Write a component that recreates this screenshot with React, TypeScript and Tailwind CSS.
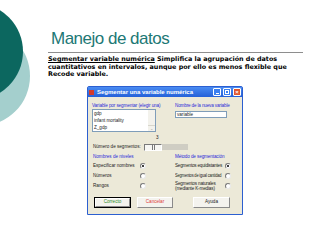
import React from "react";

const ui = { fontFamily: '"Liberation Sans", Arial, sans-serif' };

function Radio({ checked }: { checked?: boolean }) {
  return (
    <span className="flex h-[6px] w-[6px] shrink-0 items-center justify-center rounded-full border border-t-[#7a7a7a] border-l-[#7a7a7a] border-b-[#e8e8e8] border-r-[#e8e8e8] bg-white">
      {checked && <span className="h-[2px] w-[2px] rounded-full bg-black" />}
    </span>
  );
}

function XpButton({ label, color, strong, w }: { label: string; color: string; strong?: boolean; w: string }) {
  return (
    <div className={`${w} h-[11px] ${strong ? "border border-black" : ""} bg-[#f4f3ee]`}>
      <div
        className={`flex h-full items-center justify-center border border-t-white border-l-white border-b-[#8a8a8a] border-r-[#8a8a8a] ${color}`}
      >
        {label}
      </div>
    </div>
  );
}

export default function App() {
  return (
    <div className="relative h-[240px] w-[320px] overflow-hidden bg-white">
      {/* slide decoration */}
      <div className="absolute left-[-70px] top-[26px] h-[100px] w-[100px] rounded-full bg-[#a4cfcd]" />
      <div className="absolute left-[-74px] top-[3px] h-[97px] w-[97px] rounded-full bg-[#0c675f]" />

      <div className="relative pl-[48px] pt-[30px]">
        <h1
          className="ml-[3px] text-[17px] leading-[17px] tracking-[-0.5px] text-[#217875]"
          style={ui}
        >
          Manejo de datos
        </h1>
        <div className="mt-[5px] h-[1px] w-[255px] bg-[#8e8e8e]" />

        <p
          className="mt-[3px] h-[22px] whitespace-nowrap text-[6.4px] font-bold leading-[7.5px] text-black"
          style={{ fontFamily: '"DejaVu Sans", Verdana, sans-serif' }}
        >
          <span className="underline">Segmentar variable numérica</span> Simplifica la agrupación de datos
          <br />
          cuantitativos en intervalos, aunque por ello es menos flexible que
          <br />
          Recode variable.
        </p>

        {/* dialog */}
        <div className="ml-[39px] mt-[8px] w-[156px] rounded-t-[2px] border border-[#2c5fd0]" style={ui}>
          <div className="flex h-[10px] items-center bg-gradient-to-b from-[#4a8cf2] to-[#2560d8] pl-[1px] pr-[1px]">
            <span className="h-[5px] w-[5px] bg-[#d23a2c]" />
            <span className="ml-[3px] whitespace-nowrap text-[6px] font-bold leading-[6px] text-white">
              Segmentar una variable numérica
            </span>
            <div className="ml-auto flex gap-[2px]">
              <span className="flex h-[8px] w-[8px] items-end justify-center rounded-[1px] border border-white bg-[#3b7ff0] pb-[1px]">
                <span className="h-[1px] w-[3px] bg-white" />
              </span>
              <span className="flex h-[8px] w-[8px] items-center justify-center rounded-[1px] border border-white bg-[#3b7ff0]">
                <span className="h-[4px] w-[4px] border border-white" />
              </span>
              <span className="flex h-[8px] w-[8px] items-center justify-center rounded-[1px] border border-white bg-[#e0562e] text-[6px] font-bold leading-[6px] text-white">
                ×
              </span>
            </div>
          </div>

          <div className="whitespace-nowrap bg-[#ece9d8] px-[4px] pb-[6px] pt-[6px] text-[4.6px] text-[#222]">
            <div className="flex h-[30px]">
              <div className="w-[64px]">
                <div className="h-[6px] leading-[6px] tracking-[-0.1px] text-[#2a2ad8]">Variable por segmentar (elegir una)</div>
                <div className="flex h-[23px] border border-[#7f9db9] bg-white">
                  <div className="flex-1 pl-[1px] leading-[7px]">
                    <div>gdp</div>
                    <div>infant mortality</div>
                    <div>Z_gdp</div>
                  </div>
                  <div className="flex w-[7px] flex-col justify-end bg-[#f3f2ec]">
                    <div className="h-[6px] border-t border-[#d8d6cc] text-center text-[4px] leading-[5px] text-[#9a9a9a]">⌄</div>
                  </div>
                </div>
              </div>
              <div className="ml-[19px] w-[52px]">
                <div className="h-[6px] leading-[6px] tracking-[-0.15px] text-[#2a2ad8]">Nombre de la nueva variable</div>
                <div className="mt-[2px] h-[7px] border border-[#7f9db9] bg-white pl-[1px] leading-[5px]">variable</div>
              </div>
            </div>

            <div className="mt-[2px] h-[6px] pl-[64px] leading-[6px]">3</div>

            <div className="mt-[1px] flex h-[10px] items-center">
              <span className="w-[52px] pl-[1px]">Número de segmentos:</span>
              <div className="flex h-[7px] w-[18px] items-center border border-t-[#7a7a7a] border-l-[#7a7a7a] border-b-white border-r-white bg-[#f7f7f4] pl-[7px]">
                <span className="h-[5px] w-[3px] border-x border-[#7a7a7a]" />
              </div>
              <div className="h-[6px] w-[26px] bg-[#cfcdc3]" />
            </div>

            <div className="mt-[2px] flex h-[6px] leading-[6px] text-[#2a2ad8]">
              <span className="w-[83px] pl-[1px]">Nombres de niveles</span>
              <span className="tracking-[-0.1px]">Método de segmentación</span>
            </div>

            <div className="mt-[1px]">
              <div className="flex h-[10px] items-center">
                <span className="w-[48px] pl-[1px]">Especificar nombres</span>
                <Radio checked />
                <span className="ml-[29px] w-[50px] tracking-[-0.2px]">Segmentos equidistantes</span>
                <Radio checked />
              </div>
              <div className="flex h-[10px] items-center">
                <span className="w-[48px] pl-[1px]">Números</span>
                <Radio />
                <span className="ml-[29px] w-[50px]">
                  <span className="block origin-left scale-x-[0.86] tracking-[-0.2px]">Segmentos de igual cantidad</span>
                </span>
                <Radio />
              </div>
              <div className="flex h-[10px] items-center">
                <span className="w-[48px] pl-[1px]">Rangos</span>
                <Radio />
                <span className="ml-[29px] w-[50px] leading-[5px] tracking-[-0.15px]">
                  Segmentos naturales
                  <br />
                  (mediante K-medias)
                </span>
                <Radio />
              </div>
            </div>

            <div className="mt-[6px] flex">
              <div className="ml-[2px]">
                <XpButton label="Correcto" color="text-[#2b8a2b]" strong w="w-[37px]" />
              </div>
              <div className="ml-[6px]">
                <XpButton label="Cancelar" color="text-[#e03a3a]" w="w-[36px]" />
              </div>
              <div className="ml-[20px]">
                <XpButton label="Ayuda" color="text-[#222]" w="w-[37px]" />
              </div>
            </div>
          </div>
        </div>
      </div>
    </div>
  );
}
